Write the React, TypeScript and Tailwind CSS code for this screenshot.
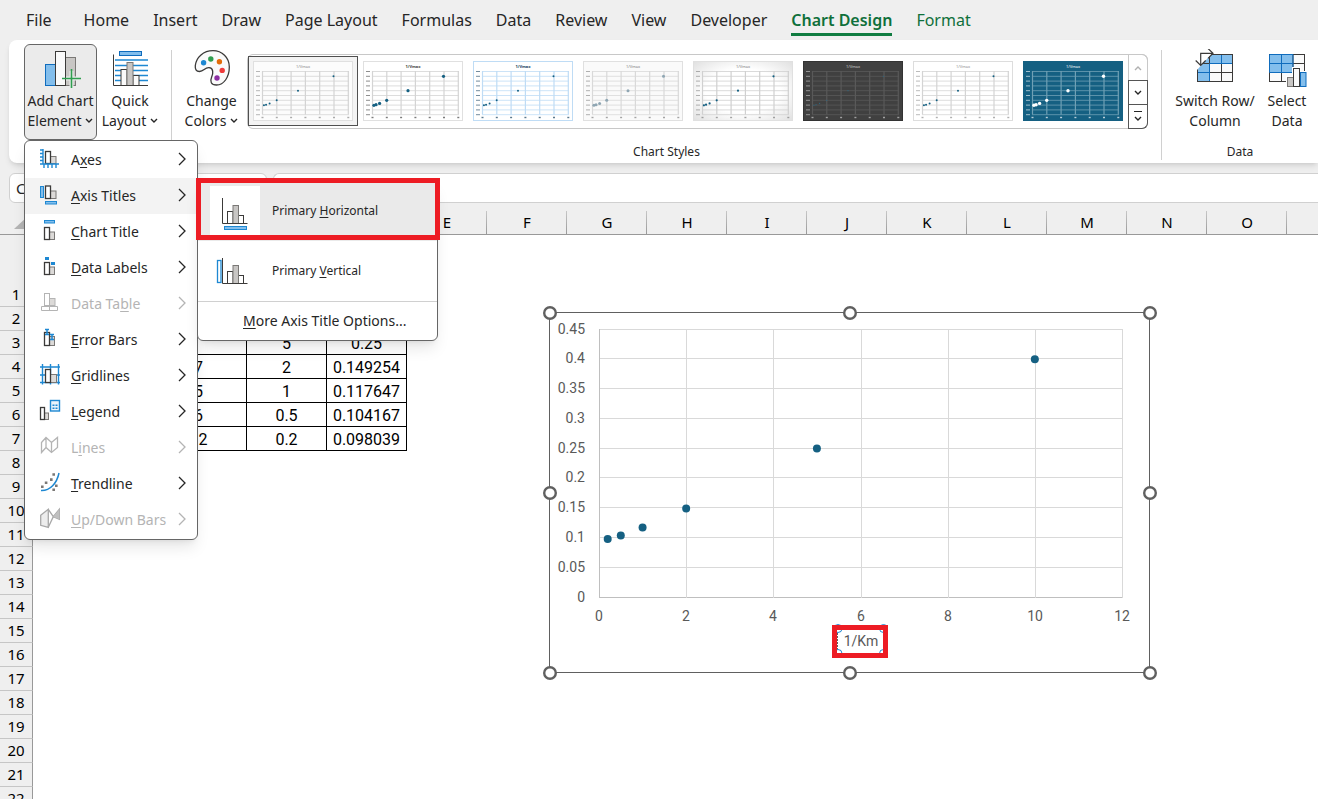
import type { ReactNode } from "react";
import clsx from "clsx";

const TABS = [
  "File",
  "Home",
  "Insert",
  "Draw",
  "Page Layout",
  "Formulas",
  "Data",
  "Review",
  "View",
  "Developer",
  "Chart Design",
  "Format",
];

const COLUMNS = "ABCDEFGHIJKLMNO".split("");

const CELLS: Record<number, string[]> = {
  2: ["0.1", "2.5", "10", "0.4"],
  3: ["0.2", "4", "5", "0.25"],
  4: ["0.5", "6.7", "2", "0.149254"],
  5: ["1", "8.5", "1", "0.117647"],
  6: ["2", "9.6", "0.5", "0.104167"],
  7: ["5", "10.2", "0.2", "0.098039"],
};

const POINTS = [
  [0.2, 0.098039],
  [0.5, 0.104167],
  [1, 0.117647],
  [2, 0.149254],
  [5, 0.25],
  [10, 0.4],
];

const BLUE = "#1e88d2";
const DARK = "#3b3a39";
const GRAY = "#7a7876";

/* ---------- ribbon icons ---------- */

function RibbonIcon({ children }: { children: ReactNode }) {
  return (
    <svg width="40" height="42" viewBox="0 0 40 42" fill="none" aria-hidden>
      {children}
    </svg>
  );
}

function AddElementIcon() {
  return (
    <RibbonIcon>
      <rect x="4.5" y="15.5" width="10" height="21" fill="#83beec" stroke="#0f6cbd" />
      <rect x="24.5" y="8.5" width="10" height="28" fill="#c8c6c4" stroke={GRAY} />
      <rect x="14.5" y="2.5" width="10" height="34" fill="#fafafa" stroke={DARK} />
      <path d="M25 29.5h16M30.5 22v17" stroke="#ebebeb" strokeWidth="4" />
      <path d="M21 29.5h19M30.5 20v19" stroke="#2f9e4f" strokeWidth="1.6" />
    </RibbonIcon>
  );
}

function QuickLayoutIcon() {
  return (
    <RibbonIcon>
      <rect x="9.5" y="2.5" width="22" height="4" fill="#83beec" stroke="#0f6cbd" />
      <path d="M5 11h33M5 16.5h33M5 21.5h33M5 26.5h33M5 31.5h33" stroke={BLUE} strokeWidth="1.4" />
      <rect x="11" y="20.5" width="6" height="16" fill="#fafafa" stroke={DARK} />
      <rect x="23" y="26.5" width="6" height="10" fill="#fafafa" stroke={DARK} />
      <rect x="17" y="13.5" width="6" height="23" fill="#c8c6c4" stroke={GRAY} />
      <path d="M3.5 5.5v31H38" stroke={DARK} />
    </RibbonIcon>
  );
}

function PaletteIcon() {
  return (
    <RibbonIcon>
      <path
        d="M21 1.7C30 1.7 37.3 8.5 37.3 18C37.3 28 32 36 24.5 36C19 36 17.8 32.5 19.5 28.5C21.5 24 21.5 19 17 18.7C12.5 18.4 12 22.5 7.5 22.5C4 22.5 3 20 3.3 16.5C4.3 8 11.5 1.7 21 1.7Z"
        fill="#fafafa"
        stroke={DARK}
        strokeWidth="1.3"
      />
      <circle cx="11.6" cy="13.7" r="2.7" fill="#1e88d2" />
      <circle cx="18.8" cy="10" r="2.7" fill="#2f9e4f" />
      <circle cx="27.4" cy="12.7" r="2.7" fill="#e36c09" />
      <circle cx="30.2" cy="21.4" r="2.7" fill="#ef3b3b" />
      <circle cx="25" cy="29" r="2.7" fill="#8e2fa3" />
    </RibbonIcon>
  );
}

function SwitchIcon() {
  return (
    <RibbonIcon>
      <rect x="2.5" y="5.5" width="35" height="27" fill="#fafafa" />
      <path d="M2.5 5.5h35v9h-23v18h-12z" fill="#83beec" />
      <path d="M2.5 14.5h35M2.5 23.5h35M14.5 5.5v27M26.5 5.5v27" stroke={DARK} />
      <path d="M14.5 14.5h23M26.5 5.5v9M2.5 23.5h12M14.5 14.5v18" stroke="#0f6cbd" />
      <rect x="2.5" y="5.5" width="35" height="27" stroke={DARK} />
      <path d="M0 0h21L2 21H0z" fill="#fff" />
      <path d="M18 4.3H5.7v12.2M13 -0.5l5 4.8-5 5M0.7 11.5l5 5 5-5" stroke={DARK} strokeWidth="1.2" />
    </RibbonIcon>
  );
}

function SelectDataIcon() {
  return (
    <RibbonIcon>
      <rect x="2.5" y="5.5" width="35" height="27" fill="#fafafa" />
      <rect x="2.5" y="5.5" width="23.5" height="18" fill="#83beec" />
      <path d="M2.5 14.5h35M2.5 23.5h35M14.5 5.5v27M26 5.5v27" stroke={DARK} />
      <rect x="2.5" y="5.5" width="35" height="27" stroke={DARK} />
      <path d="M2.5 14.5H26M14.5 5.5v18M2.5 5.5H26v18H2.5z" stroke="#0f6cbd" />
      <path d="M19 40V27h6v-9h9v4h7v18z" fill="#fff" />
      <rect x="20.5" y="28.5" width="6" height="9" fill="#c8c6c4" stroke={GRAY} />
      <rect x="33.5" y="23.5" width="5.5" height="14" fill="#83beec" stroke="#0f6cbd" />
      <rect x="26.5" y="19.5" width="6" height="18" fill="#fafafa" stroke={DARK} />
    </RibbonIcon>
  );
}

function Caret({ className = "" }: { className?: string }) {
  return (
    <svg width="8" height="6" viewBox="0 0 8 6" fill="none" className={clsx("inline-block", className)} aria-hidden>
      <path d="M1 1l3 3 3-3" stroke="currentColor" strokeWidth="1.4" />
    </svg>
  );
}

/* ---------- menu icons ---------- */

type Bar = [number, number, number, number];

function Bars({ dark, gray, muted }: { dark: Bar; gray: Bar; muted?: boolean }) {
  return (
    <>
      <rect x={gray[0]} y={gray[1]} width={gray[2]} height={gray[3]} fill="#dcdad8" stroke={muted ? "#b4b4b4" : GRAY} />
      <rect
        x={dark[0]}
        y={dark[1]}
        width={dark[2]}
        height={dark[3]}
        fill="#fff"
        stroke={muted ? "#b4b4b4" : DARK}
        strokeWidth={muted ? 1 : 1.3}
      />
    </>
  );
}

const MENU_ICONS: Record<string, ReactNode> = {
  Axes: (
    <>
      <Bars dark={[5.5, 1.5, 5, 12]} gray={[10.5, 6.5, 5.5, 7]} />
      <path
        d="M3-1v15.5M0 14h19M0 0h3M0 3.5h3M0 7h3M0 10.5h3M4 14v4M8 14v4M12 14v4M16 14v4"
        stroke={BLUE}
        strokeWidth="1.4"
      />
    </>
  ),
  "Axis Titles": (
    <>
      <Bars dark={[5.5, 0, 5, 12.5]} gray={[10.5, 5, 5.5, 7.5]} />
      <rect x="0.5" y="0.5" width="3" height="11" fill="#83beec" stroke={BLUE} />
      <rect x="5.5" y="15.5" width="11" height="2.5" fill="#83beec" stroke={BLUE} />
    </>
  ),
  "Chart Title": (
    <>
      <Bars dark={[4.5, 5.5, 5, 12]} gray={[9.5, 10, 5, 7.5]} />
      <rect x="4.5" y="-1.5" width="10" height="2.5" fill="#83beec" stroke={BLUE} />
    </>
  ),
  "Data Labels": (
    <>
      <Bars dark={[4.5, 4.5, 5, 12]} gray={[9.5, 9, 5, 7.5]} />
      <rect x="5" y="-1" width="4" height="3" fill={BLUE} />
      <rect x="11" y="4" width="4" height="3" fill={BLUE} />
    </>
  ),
  "Data Table": (
    <>
      <Bars dark={[4.5, -0.5, 5, 12]} gray={[9.5, 4.5, 5.5, 7]} muted />
      <path d="M1.5 12.5h16v4h-16zM9.5 12.5v4" fill="#fff" stroke="#b4b4b4" />
    </>
  ),
  "Error Bars": (
    <>
      <Bars dark={[4.5, 2.5, 5, 13]} gray={[9.5, 6.5, 5, 9]} />
      <path d="M5-.5h4M5 4.5h4M7-.5v5M10 4.5h4M10 9.5h4M12 4.5v5" stroke={BLUE} strokeWidth="1.5" />
    </>
  ),
  Gridlines: (
    <>
      <path d="M0 1h20M0 9h20M0 16.5h20M2.5-2v20.5M10.5-2v20.5M18.5-2v20.5" stroke={BLUE} strokeWidth="1.4" />
      <Bars dark={[5.5, 3.5, 5, 13]} gray={[10.5, 8.5, 6, 8]} />
    </>
  ),
  Legend: (
    <>
      <Bars dark={[0.5, 5.5, 4, 12]} gray={[4.5, 11, 4, 6.5]} />
      <rect x="10.5" y="-1.5" width="9" height="10.5" fill="#eaf4fc" stroke={BLUE} strokeWidth="1.4" />
      <path d="M12.5 2.5h2v1.5h-2zM15.5 2.5h2v1.5h-2zM12.5 5.5h2V7h-2zM15.5 5.5h2V7h-2z" fill={BLUE} />
    </>
  ),
  Lines: (
    <path
      d="M1.5 4.5l4.5-5 5.5 5 6-5v10l-6 5-5.5-5-4.5 5zM6-.5v10M11.5 4.5v10"
      stroke="#b4b4b4"
      strokeWidth="1.3"
    />
  ),
  Trendline: (
    <>
      <path d="M1 16.5C10 17 17 9 19-1" stroke={BLUE} strokeWidth="1.5" />
      <path
        d="M1 11.5h2.6v2.6H1zM4.8 7.5h2.6v2.6H4.8zM10 4.3h2.6v2.6H10zM12.4-.8H15v2.6h-2.6zM15 10.5h2.6v2.6H15zM12.4 14.5H15v2.6h-2.6z"
        fill={GRAY}
      />
    </>
  ),
  "Up/Down Bars": (
    <>
      <path d="M.7 5.3l7.6-6v18l-7.6-2z" fill="#ededed" stroke="#a8a8a8" strokeWidth="1.3" />
      <path d="M8.3-.7l5 7.4 6-7.4v10l-6-2.6-5 10.6" stroke="#a8a8a8" strokeWidth="1.3" />
      <path d="M13.3 6.7l6-7.4v10z" fill="#c0c0c0" />
    </>
  ),
};

const MENU_ITEMS = [
  { label: "Axes", key: 1 },
  { label: "Axis Titles", key: 0, active: true },
  { label: "Chart Title", key: 0 },
  { label: "Data Labels", key: 0 },
  { label: "Data Table", key: 7, disabled: true },
  { label: "Error Bars", key: 0 },
  { label: "Gridlines", key: 0 },
  { label: "Legend", key: 0 },
  { label: "Lines", key: 1, disabled: true },
  { label: "Trendline", key: 0 },
  { label: "Up/Down Bars", key: 0, disabled: true },
];

function AccessLabel({ text, index }: { text: string; index: number }) {
  return (
    <span>
      {text.slice(0, index)}
      <span className="underline underline-offset-2">{text[index]}</span>
      {text.slice(index + 1)}
    </span>
  );
}

function AxisTitleIcon({ vertical }: { vertical?: boolean }) {
  return (
    <svg width="50" height="50" viewBox="0 0 50 50" fill="none" aria-hidden>
      <rect x="17.5" y="25.5" width="5.5" height="12" fill="#fff" stroke={DARK} />
      <rect x="28.5" y="29.5" width="5" height="8" fill="#fff" stroke={DARK} />
      <rect x="23" y="19.5" width="5.5" height="18" fill="#c8c6c4" stroke={GRAY} />
      <path d="M12.5 12v25.5h25" stroke={DARK} />
      {vertical ? (
        <rect x="7.5" y="14.5" width="3.5" height="22" fill="#fff" stroke={BLUE} strokeWidth="1.3" />
      ) : (
        <rect x="14.5" y="40.5" width="22" height="3" fill="#83beec" stroke={BLUE} />
      )}
    </svg>
  );
}

function AxisTitlesSubmenu() {
  return (
    <div className="absolute top-0.5 left-full z-20 w-[241px] rounded-md border border-[#666] bg-white shadow-lg">
      <button className="flex h-[60px] w-full items-center bg-[#eaeaea] pl-3 text-xs">
        <span className="bg-white">
          <AxisTitleIcon />
        </span>
        <span className="pl-3">
          <AccessLabel text="Primary Horizontal" index={8} />
        </span>
      </button>
      <button className="flex h-[60px] w-full items-center pl-3 text-xs">
        <AxisTitleIcon vertical />
        <span className="pl-3">
          <AccessLabel text="Primary Vertical" index={8} />
        </span>
      </button>
      <button className="flex h-[39px] w-full items-center border-t border-[#d0d0d0] pl-[45px] text-sm">
        <AccessLabel text="More Axis Title Options..." index={0} />
      </button>
      <div className="pointer-events-none absolute -top-[3px] -left-0.5 h-[62px] w-[244px] border-5 border-[#ed1c24]" />
    </div>
  );
}

function ElementMenu() {
  return (
    <div className="absolute top-full -left-px z-10 w-[174px] rounded-md border border-[#666] bg-white py-px shadow-lg">
      {MENU_ITEMS.map((item) => (
        <div key={item.label} className="relative">
          <button
            disabled={item.disabled}
            className={clsx(
              "flex h-9 w-full items-center pr-[11px] pl-[15px] text-sm",
              item.active && "bg-[#f3f3f3]",
              item.disabled ? "text-[#b4b4b4]" : "text-[#262626]",
            )}
          >
            <svg width="20" height="20" viewBox="0 0 20 20" fill="none" className="overflow-visible" aria-hidden>
              {MENU_ICONS[item.label]}
            </svg>
            <span className="flex-1 pl-[11px] text-left whitespace-nowrap">
              <AccessLabel text={item.label} index={item.key} />
            </span>
            <svg width="8" height="16" viewBox="0 0 8 16" fill="none" aria-hidden>
              <path d="M1 1l6 6-6 6" stroke="currentColor" strokeWidth="1.3" />
            </svg>
          </button>
          {item.active && <AxisTitlesSubmenu />}
        </div>
      ))}
    </div>
  );
}

/* ---------- chart style gallery ---------- */

const STYLES = [
  { bg: "#fcfcfc", grid: "#d4d4d4", dot: "#156082", ink: "#8a8a8a", edge: "#e0e0e0", r: 1 },
  { bg: "#ffffff", grid: "#d4d4d4", dot: "#156082", ink: "#444444", edge: "#e0e0e0", r: 1.6, bold: true },
  { bg: "#ffffff", grid: "#bfdcf5", dot: "#156082", ink: "#17415f", edge: "#bfdcf5", r: 1, bold: true },
  { bg: "#fafafa", grid: "#d9d9d9", dot: "#8fa6b3", ink: "#808080", edge: "#e0e0e0", r: 1.5 },
  { bg: "url(#fade)", grid: "#d0d0d0", dot: "#156082", ink: "#808080", edge: "#e0e0e0", r: 1.1 },
  { bg: "#404040", grid: "#595959", dot: "#2b6580", ink: "#cccccc", edge: "#333333", r: 0.6 },
  { bg: "#ffffff", grid: "#d4d4d4", dot: "#156082", ink: "#909090", edge: "#dddddd", r: 1 },
  { bg: "#156082", grid: "#6fa0b5", dot: "#ffffff", ink: "#ffffff", edge: "#156082", r: 1.7 },
];

const THUMB_ROWS = [0, 1, 2, 3, 4, 5, 6, 7, 8, 9];
const THUMB_COLS = [0, 1, 2, 3, 4, 5, 6];

function StyleThumb({ style }: { style: (typeof STYLES)[number] }) {
  return (
    <svg width="100" height="60" viewBox="0 0 100 60" aria-hidden>
      {style.bg === "url(#fade)" && (
        <defs>
          <radialGradient id="fade" r="0.75">
            <stop offset="0.5" stopColor="#fff" />
            <stop offset="1" stopColor="#dcdcdc" />
          </radialGradient>
        </defs>
      )}
      <rect x="0.5" y="0.5" width="99" height="59" fill={style.bg} stroke={style.edge} />
      {THUMB_ROWS.map((i) => (
        <g key={i}>
          <path d={`M9 ${10.5 + i * 4.8}h87`} stroke={style.grid} strokeWidth="0.8" />
          <path d={`M3 ${10.5 + i * 4.8}h4`} stroke={style.ink} strokeWidth="1" opacity="0.6" />
        </g>
      ))}
      {THUMB_COLS.map((i) => (
        <g key={i}>
          <path d={`M${9.5 + i * 14.3} 10v43.5`} stroke={style.grid} strokeWidth="1.2" />
          <path d={`M${8.5 + i * 14.3} 56.5h2`} stroke={style.ink} strokeWidth="1.4" opacity="0.7" />
        </g>
      ))}
      {POINTS.map(([x, y]) => (
        <circle key={x} cx={9.5 + x * 7.1} cy={53.7 - y * 96} r={style.r} fill={style.dot} />
      ))}
      <text
        x="50"
        y="6.5"
        textAnchor="middle"
        fill={style.ink}
        className={clsx("text-[4px]", style.bold && "font-bold")}
      >
        1/Vmax
      </text>
    </svg>
  );
}

function StyleGallery() {
  return (
    <div className="flex h-[75px] rounded-md border border-[#c8c8c8]">
      <div className="flex items-start pt-px">
        {STYLES.map((style, i) => (
          <button
            key={i}
            aria-label={`Style ${i + 1}`}
            className={clsx(
              "flex h-[70px] w-[110px] items-center justify-center border",
              i === 0 ? "border-[#505050] bg-[#f3f3f3]" : "border-transparent",
            )}
          >
            <StyleThumb style={style} />
          </button>
        ))}
      </div>
      <div className="-my-px -mr-px flex w-5 flex-col">
        <button
          aria-label="Scroll up"
          className="flex h-[26px] items-center justify-center rounded-tr-md border border-b-0 border-[#c8c8c8] text-[#b0b0b0]"
        >
          <Caret className="rotate-180" />
        </button>
        <button aria-label="Scroll down" className="flex h-[25px] items-center justify-center border border-[#555]">
          <Caret />
        </button>
        <button
          aria-label="More styles"
          className="flex flex-1 flex-col items-center justify-center gap-1 rounded-br-md border border-t-0 border-[#555]"
        >
          <span className="h-px w-2 bg-[#262626]" />
          <Caret />
        </button>
      </div>
    </div>
  );
}

/* ---------- ribbon ---------- */

type RibbonButtonProps = {
  icon: ReactNode;
  top: string;
  bottom: string;
  caret?: boolean;
  className?: string;
};

function RibbonButton({ icon, top, bottom, caret, className }: RibbonButtonProps) {
  return (
    <button
      className={clsx(
        "flex h-24 flex-col items-center border pt-1 text-sm leading-5 whitespace-nowrap",
        className ?? "border-transparent",
      )}
    >
      {icon}
      <span>{top}</span>
      <span>
        {bottom}
        {caret && <Caret className="mb-0.5 ml-1" />}
      </span>
    </button>
  );
}

function Divider() {
  return <div className="mt-1.5 h-[110px] w-px shrink-0 bg-[#d0d0d0]" />;
}

function Ribbon() {
  return (
    <div className="relative z-10 ml-[9px] flex h-[123px] shrink-0 rounded-l-lg bg-white pt-1 pl-[15px] shadow-md">
      <div className="relative">
        <RibbonButton
          icon={<AddElementIcon />}
          top="Add Chart"
          bottom="Element"
          caret
          className="w-[73px] rounded-md border-[#666] bg-[#ebebeb]"
        />
        <div className="absolute top-24 left-px">
          <ElementMenu />
        </div>
      </div>
      <RibbonButton icon={<QuickLayoutIcon />} top="Quick" bottom="Layout" caret className="w-[66px] border-transparent" />
      <div className="w-2" />
      <Divider />
      <div className="flex flex-col">
        <div className="flex pr-[13px]">
          <RibbonButton
            icon={<PaletteIcon />}
            top="Change"
            bottom="Colors"
            caret
            className="w-[75px] border-transparent pl-1"
          />
          <div className="pt-2.5">
            <StyleGallery />
          </div>
        </div>
        <p className="pt-1 text-center text-xs">Chart Styles</p>
      </div>
      <Divider />
      <div className="flex min-w-[156px] flex-1 flex-col">
        <div className="flex pl-2">
          <RibbonButton icon={<SwitchIcon />} top="Switch Row/" bottom="Column" className="w-[90px] border-transparent" />
          <RibbonButton icon={<SelectDataIcon />} top="Select" bottom="Data" className="w-[54px] border-transparent" />
        </div>
        <p className="pt-1 text-center text-xs">Data</p>
      </div>
    </div>
  );
}

/* ---------- sheet ---------- */

const HEAD_CELL =
  "border-b border-[#999] bg-[linear-gradient(#c6c6c6,#999)] bg-[length:1px_23px] bg-right-bottom bg-no-repeat p-0 pt-1.5 text-[15px] leading-5 font-normal";

function Sheet() {
  return (
    <table className="w-[1447px] table-fixed border-separate border-spacing-0 text-center">
      <colgroup>
        <col className="w-[33px]" />
        <col className="w-[105px]" />
        <col className="w-[109px]" />
        {COLUMNS.slice(2).map((c) => (
          <col key={c} className="w-20" />
        ))}
        <col />
      </colgroup>
      <thead className="bg-[#efefef]">
        <tr className="h-8">
          <th className="border-b border-[#999] p-0">
            <svg width="16" height="14" viewBox="0 0 16 14" className="mt-2 mr-1 ml-auto" aria-hidden>
              <path d="M15 0v13H1z" fill="#b4b4b4" />
            </svg>
          </th>
          {COLUMNS.map((c) => (
            <th key={c} className={HEAD_CELL}>
              {c}
            </th>
          ))}
          <th className="border-b border-[#999] p-0" />
        </tr>
      </thead>
      <tbody>
        {Array.from({ length: 22 }, (_, i) => i + 1).map((row) => (
          <tr key={row} className={row === 1 ? "h-[72px] align-bottom" : "h-6"}>
            <th className="border-r border-b border-r-[#999] border-b-[#c6c6c6] bg-[#efefef] p-0 pb-0.5 text-[15px] leading-5 font-normal">
              {row}
            </th>
            {CELLS[row]?.map((value, i) => (
              <td
                key={i}
                className="border-r border-b border-black p-0 pt-0.5 font-['Roboto',sans-serif] text-base leading-5"
              >
                {value}
              </td>
            ))}
          </tr>
        ))}
      </tbody>
    </table>
  );
}

const Y_TICKS = [0, 0.05, 0.1, 0.15, 0.2, 0.25, 0.3, 0.35, 0.4, 0.45];
const X_TICKS = [0, 2, 4, 6, 8, 10, 12];
const px = (x: number) => 50 + (x * 523) / 12;
const py = (y: number) => 285.5 - (y * 268) / 0.45;

const HANDLES = [
  [1, 1],
  [301, 1],
  [601, 1],
  [1, 181],
  [601, 181],
  [1, 361],
  [301, 361],
  [601, 361],
];

function AxisTitleBox() {
  return (
    <div className="absolute top-[313px] left-[283px] flex h-[33px] w-14 items-center justify-center bg-white pb-0.5 pl-0.5 font-['Roboto',sans-serif] text-sm text-[#595959]">
      <svg width="56" height="33" viewBox="0 0 56 33" fill="none" className="absolute inset-0 overflow-visible" aria-hidden>
        <path d="M5.5 5v23" stroke="#606060" strokeDasharray="2 1" />
        <circle cx="6" cy="3.5" r="4" fill="#fff" stroke={BLUE} />
        <circle cx="51.5" cy="3.5" r="4" fill="#fff" stroke={BLUE} />
        <circle cx="6" cy="28.5" r="4" fill="#fff" stroke={BLUE} />
        <circle cx="51.5" cy="28.5" r="4" fill="#fff" stroke={BLUE} />
      </svg>
      <span>1/Km</span>
      <div className="absolute inset-0 border-5 border-[#ed1c24]" />
    </div>
  );
}

function ScatterChart() {
  return (
    <div className="absolute top-[109px] left-[549px]">
      <svg
        width="601"
        height="361"
        viewBox="0 0 601 361"
        className="overflow-visible font-['Roboto',sans-serif] text-sm"
        role="img"
        aria-label="Scatter chart"
      >
        <rect x="0.5" y="0.5" width="600" height="360" fill="#fff" stroke="#606060" />
        {Y_TICKS.map((t) => (
          <g key={t}>
            <path d={`M50 ${Math.round(py(t)) - 0.5}h524`} stroke={t === 0 ? "#bfbfbf" : "#d9d9d9"} />
            <text x="36" y={Math.round(py(t)) + 4} textAnchor="end" fill="#595959">
              {t}
            </text>
          </g>
        ))}
        {X_TICKS.map((t) => (
          <g key={t}>
            <path d={`M${Math.round(px(t)) + 0.5} 17v269`} stroke={t === 0 ? "#bfbfbf" : "#d9d9d9"} />
            <text x={Math.round(px(t))} y="309" textAnchor="middle" fill="#595959">
              {t}
            </text>
          </g>
        ))}
        {POINTS.map(([x, y]) => (
          <circle key={x} cx={px(x)} cy={py(y)} r="4" fill="#156082" />
        ))}
        {HANDLES.map(([x, y]) => (
          <circle key={`${x}-${y}`} cx={x} cy={y} r="5.8" fill="#fff" stroke="#606060" strokeWidth="2.4" />
        ))}
      </svg>
      <AxisTitleBox />
    </div>
  );
}

export default function App() {
  return (
    <div className="flex h-screen flex-col overflow-hidden bg-[#efefef] font-['Noto_Sans',sans-serif] text-[#262626]">
      <nav className="flex h-10 shrink-0 items-start gap-6 pt-1 pl-[26px] text-base">
        {TABS.map((tab) => (
          <button
            key={tab}
            className={clsx(
              "h-8 border-b-3 pt-0.5 whitespace-nowrap first:mr-2",
              tab === "Chart Design" ? "border-[#107c41] font-semibold" : "border-transparent",
              (tab === "Chart Design" || tab === "Format") && "text-[#0f703b]",
            )}
          >
            {tab}
          </button>
        ))}
      </nav>
      <Ribbon />
      <div className="flex shrink-0 gap-1.5 pt-2.5 pl-[9px]">
        <input
          aria-label="Name box"
          defaultValue="Chart 1"
          className="h-[30px] w-[258px] rounded-md border border-[#d0d0d0] bg-white px-1.5 text-[15px]"
        />
        <input
          aria-label="Formula bar"
          className="h-[30px] min-w-0 flex-1 rounded-l-md border border-r-0 border-[#d0d0d0] bg-white px-2 text-[15px]"
        />
      </div>
      <main className="relative min-h-0 flex-1 overflow-hidden bg-white text-black">
        <Sheet />
        <ScatterChart />
      </main>
    </div>
  );
}
